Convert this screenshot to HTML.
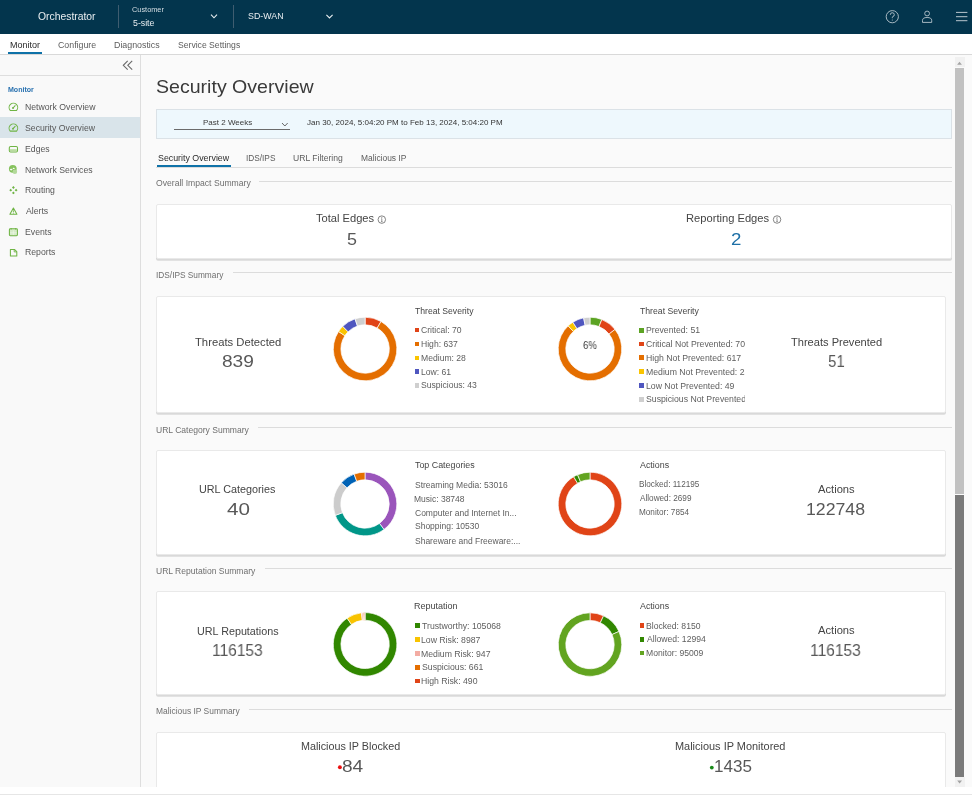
<!DOCTYPE html>
<html><head><meta charset="utf-8"><title>Security Overview</title>
<style>
html,body{margin:0;padding:0;width:972px;height:795px;overflow:hidden;background:#fafafa;font-family:"Liberation Sans", sans-serif;}
.a{position:absolute;}
.t{position:absolute;white-space:nowrap;line-height:1;font-family:"Liberation Sans", sans-serif;will-change:transform;}
.sq{position:absolute;width:4.8px;height:4.8px;}
.card{position:absolute;background:#fff;border:1px solid #e9e9e9;border-radius:2px;box-shadow:0 1.8px 0.4px rgba(0,0,0,0.13);box-sizing:border-box;}
.hr{position:absolute;height:1px;background:#dcdcdc;}
</style></head><body>
<!-- header -->
<div class="a" style="left:0;top:0;width:972px;height:33.5px;background:#03354d"></div>
<div class="a" style="left:117.6px;top:5px;width:1px;height:23px;background:#3f5d70"></div>
<div class="a" style="left:232.8px;top:5px;width:1px;height:23px;background:#3f5d70"></div>
<!-- nav -->
<div class="a" style="left:0;top:33.5px;width:972px;height:20.5px;background:#fff"></div>
<div class="a" style="left:0;top:54px;width:972px;height:1px;background:#d9d9d9"></div>
<div class="a" style="left:8.4px;top:52.3px;width:33.6px;height:2px;background:#0f72a8"></div>
<!-- sidebar -->
<div class="a" style="left:0;top:55px;width:140px;height:740px;background:#f9f9f9"></div>
<div class="a" style="left:140px;top:55px;width:1px;height:740px;background:#dedede"></div>
<div class="a" style="left:0;top:75px;width:140px;height:1px;background:#dedede"></div>
<div class="a" style="left:0;top:117.4px;width:140px;height:20.7px;background:#d9e4ea"></div>
<!-- date bar -->
<div class="a" style="left:156px;top:109px;width:796px;height:30px;background:#eef8fd;border:1px solid #dbe2e7;box-sizing:border-box"></div>
<div class="a" style="left:174px;top:128.6px;width:115.7px;height:1.1px;background:#6b6b6b"></div>
<!-- tabs -->
<div class="a" style="left:156px;top:167px;width:796px;height:1px;background:#dcdcdc"></div>
<div class="a" style="left:157px;top:165.3px;width:73.5px;height:2px;background:#0f72a8"></div>
<!-- section lines -->
<div class="hr" style="left:259px;top:181.1px;width:693px"></div>
<div class="hr" style="left:232.5px;top:272.3px;width:719.5px"></div>
<div class="hr" style="left:258px;top:427.3px;width:694px"></div>
<div class="hr" style="left:264.5px;top:568px;width:687.5px"></div>
<div class="hr" style="left:248.6px;top:709px;width:703.4px"></div>
<!-- cards -->
<div class="card" style="left:156px;top:204px;width:796px;height:55px"></div>
<div class="card" style="left:156px;top:296px;width:790px;height:117px"></div>
<div class="card" style="left:156px;top:450px;width:790px;height:105px"></div>
<div class="card" style="left:156px;top:591px;width:790px;height:104px"></div>
<div class="card" style="left:156px;top:732px;width:790px;height:57px"></div>
<!-- bottom strip -->
<div class="a" style="left:0;top:786.6px;width:972px;height:8.4px;background:#fff"></div>
<div class="a" style="left:0;top:794.2px;width:972px;height:0.8px;background:#e6e6e6"></div>
<!-- scrollbar -->
<div class="a" style="left:955px;top:57px;width:10px;height:10px;background:#f1f1f1"></div>
<div class="a" style="left:955px;top:777px;width:10px;height:10px;background:#f1f1f1"></div>
<div class="a" style="left:955px;top:68.1px;width:9.3px;height:426.4px;background:#c1c1c1"></div>
<div class="a" style="left:955px;top:494.5px;width:9.3px;height:282.7px;background:#7a7a7a"></div>
<svg class="a" style="left:0;top:0" width="972" height="795" viewBox="0 0 972 795">
<path d="M957.1,64.8 L959.5,61.8 L961.9,64.8 Z" fill="#a3a3a3"/>
<path d="M957.2,780.6 L959.6,783.6 L962,780.6 Z" fill="#a3a3a3"/>
<!-- header chevrons -->
<path d="M211,14.6 L214,17.8 L217,14.6" fill="none" stroke="#e9eef1" stroke-width="1.1"/>
<path d="M326.4,14.9 L329.5,17.9 L332.6,14.9" fill="none" stroke="#e9eef1" stroke-width="1.1"/>
<!-- header icons -->
<circle cx="892.3" cy="16.7" r="6.1" fill="none" stroke="#b9c6ce" stroke-width="0.9"/>
<path d="M890.3,14.8 A2,2 0 1 1 892.6,16.7 Q892.3,17 892.3,18.2" fill="none" stroke="#b9c6ce" stroke-width="0.9"/>
<circle cx="892.3" cy="20" r="0.55" fill="#b9c6ce"/>
<circle cx="927.1" cy="13.5" r="2.4" fill="none" stroke="#b9c6ce" stroke-width="0.9"/>
<path d="M922.5,22.4 V20.4 Q922.5,17.5 927.1,17.5 Q931.7,17.5 931.7,20.4 V22.4 Z" fill="none" stroke="#b9c6ce" stroke-width="0.9" stroke-linejoin="round"/>
<path d="M956,12.4 H967.4 M956,16.7 H967.4 M956,20.7 H967.4" stroke="#b9c6ce" stroke-width="1"/>
<!-- collapse icon -->
<path d="M127.7,60.9 L123.3,65.3 L127.7,69.7 M132.2,60.9 L127.8,65.3 L132.2,69.7" fill="none" stroke="#6a6a6a" stroke-width="1.1"/>
<!-- select chevron -->
<path d="M282,123 L284.85,126 L287.7,123" fill="none" stroke="#555" stroke-width="0.9"/>
<!-- info icons -->
<circle cx="381.8" cy="219.6" r="3.75" fill="none" stroke="#666" stroke-width="0.8"/>
<path d="M381.3,218.6 H381.8 V221.6 M381.1,221.6 H382.5" fill="none" stroke="#666" stroke-width="0.7"/><circle cx="381.8" cy="217.3" r="0.5" fill="#666"/>
<circle cx="777.05" cy="219.5" r="3.75" fill="none" stroke="#666" stroke-width="0.8"/>
<path d="M776.55,218.5 H777.05 V221.5 M776.35,221.5 H777.75" fill="none" stroke="#666" stroke-width="0.7"/><circle cx="777.05" cy="217.2" r="0.5" fill="#666"/>
<!-- dots -->
<circle cx="339.9" cy="767.3" r="1.95" fill="#ea1010"/>
<circle cx="711.8" cy="767.6" r="1.9" fill="#1a8a1a"/>
<path d="M365.100,317.200 A31.8,31.8 0 0 1 381.017,321.470 L377.213,328.050 A24.2,24.2 0 0 0 365.100,324.800 Z" fill="#e04417" stroke="#fff" stroke-width="0.7"/>
<path d="M381.017,321.470 A31.8,31.8 0 1 1 338.540,331.513 L344.888,335.692 A24.2,24.2 0 1 0 377.213,328.050 Z" fill="#e46e00" stroke="#fff" stroke-width="0.7"/>
<path d="M338.540,331.513 A31.8,31.8 0 0 1 342.762,326.367 L348.101,331.776 A24.2,24.2 0 0 0 344.888,335.692 Z" fill="#fac400" stroke="#fff" stroke-width="0.7"/>
<path d="M342.762,326.367 A31.8,31.8 0 0 1 355.036,318.835 L357.441,326.044 A24.2,24.2 0 0 0 348.101,331.776 Z" fill="#4f56bf" stroke="#fff" stroke-width="0.7"/>
<path d="M355.036,318.835 A31.8,31.8 0 0 1 365.100,317.200 L365.100,324.800 A24.2,24.2 0 0 0 357.441,326.044 Z" fill="#cfcfcf" stroke="#fff" stroke-width="0.7"/>
<path d="M590.000,317.200 A31.8,31.8 0 0 1 601.852,319.491 L599.020,326.544 A24.2,24.2 0 0 0 590.000,324.800 Z" fill="#5ca323" stroke="#fff" stroke-width="0.7"/>
<path d="M601.852,319.491 A31.8,31.8 0 0 1 615.031,329.387 L609.049,334.074 A24.2,24.2 0 0 0 599.020,326.544 Z" fill="#e04417" stroke="#fff" stroke-width="0.7"/>
<path d="M615.031,329.387 A31.8,31.8 0 1 1 568.176,325.871 L573.392,331.399 A24.2,24.2 0 1 0 609.049,334.074 Z" fill="#e46e00" stroke="#fff" stroke-width="0.7"/>
<path d="M568.176,325.871 A31.8,31.8 0 0 1 572.862,322.213 L576.958,328.615 A24.2,24.2 0 0 0 573.392,331.399 Z" fill="#fac400" stroke="#fff" stroke-width="0.7"/>
<path d="M572.862,322.213 A31.8,31.8 0 0 1 583.614,317.848 L585.140,325.293 A24.2,24.2 0 0 0 576.958,328.615 Z" fill="#4f56bf" stroke="#fff" stroke-width="0.7"/>
<path d="M583.614,317.848 A31.8,31.8 0 0 1 590.000,317.200 L590.000,324.800 A24.2,24.2 0 0 0 585.140,325.293 Z" fill="#cfcfcf" stroke="#fff" stroke-width="0.7"/>
<path d="M365.000,472.200 A31.8,31.8 0 0 1 384.004,529.496 L379.463,523.403 A24.2,24.2 0 0 0 365.000,479.800 Z" fill="#9a55bb" stroke="#fff" stroke-width="0.7"/>
<path d="M384.004,529.496 A31.8,31.8 0 0 1 335.312,515.396 L342.407,512.673 A24.2,24.2 0 0 0 379.463,523.403 Z" fill="#009688" stroke="#fff" stroke-width="0.7"/>
<path d="M335.312,515.396 A31.8,31.8 0 0 1 341.368,482.722 L347.016,487.807 A24.2,24.2 0 0 0 342.407,512.673 Z" fill="#cccccc" stroke="#fff" stroke-width="0.7"/>
<path d="M341.368,482.722 A31.8,31.8 0 0 1 354.124,474.118 L356.723,481.259 A24.2,24.2 0 0 0 347.016,487.807 Z" fill="#0062b5" stroke="#fff" stroke-width="0.7"/>
<path d="M354.124,474.118 A31.8,31.8 0 0 1 365.000,472.200 L365.000,479.800 A24.2,24.2 0 0 0 356.723,481.259 Z" fill="#e46e00" stroke="#fff" stroke-width="0.7"/>
<path d="M590.000,472.200 A31.8,31.8 0 1 1 573.645,476.728 L577.554,483.246 A24.2,24.2 0 1 0 590.000,479.800 Z" fill="#e04417" stroke="#fff" stroke-width="0.7"/>
<path d="M573.645,476.728 A31.8,31.8 0 0 1 577.557,474.735 L580.531,481.729 A24.2,24.2 0 0 0 577.554,483.246 Z" fill="#318700" stroke="#fff" stroke-width="0.7"/>
<path d="M577.557,474.735 A31.8,31.8 0 0 1 590.000,472.200 L590.000,479.800 A24.2,24.2 0 0 0 580.531,481.729 Z" fill="#62a420" stroke="#fff" stroke-width="0.7"/>
<path d="M365.100,612.600 A31.8,31.8 0 1 1 347.154,618.148 L351.443,624.422 A24.2,24.2 0 1 0 365.100,620.200 Z" fill="#318700" stroke="#fff" stroke-width="0.7"/>
<path d="M347.154,618.148 A31.8,31.8 0 0 1 361.499,612.805 L362.359,620.356 A24.2,24.2 0 0 0 351.443,624.422 Z" fill="#f8c300" stroke="#fff" stroke-width="0.7"/>
<path d="M361.499,612.805 A31.8,31.8 0 0 1 363.121,612.662 L363.594,620.247 A24.2,24.2 0 0 0 362.359,620.356 Z" fill="#f3aca3" stroke="#fff" stroke-width="0.7"/>
<path d="M363.121,612.662 A31.8,31.8 0 0 1 364.257,612.611 L364.459,620.209 A24.2,24.2 0 0 0 363.594,620.247 Z" fill="#e46e00" stroke="#fff" stroke-width="0.7"/>
<path d="M364.257,612.611 A31.8,31.8 0 0 1 365.100,612.600 L365.100,620.200 A24.2,24.2 0 0 0 364.459,620.209 Z" fill="#e04417" stroke="#fff" stroke-width="0.7"/>
<path d="M590.000,612.800 A31.8,31.8 0 0 1 603.570,615.841 L600.327,622.714 A24.2,24.2 0 0 0 590.000,620.400 Z" fill="#e04417" stroke="#fff" stroke-width="0.7"/>
<path d="M603.570,615.841 A31.8,31.8 0 0 1 618.944,631.429 L612.027,634.577 A24.2,24.2 0 0 0 600.327,622.714 Z" fill="#318700" stroke="#fff" stroke-width="0.7"/>
<path d="M618.944,631.429 A31.8,31.8 0 1 1 590.000,612.800 L590.000,620.400 A24.2,24.2 0 1 0 612.027,634.577 Z" fill="#62a420" stroke="#fff" stroke-width="0.7"/>
<g transform="translate(13.4,107.1)"><path d="M-3.2,3.3 A4.3,4.3 0 1 1 3.2,3.3 Z" fill="none" stroke="#6fb444" stroke-width="1.05" stroke-linejoin="round"/><path d="M-0.4,0.9 L2.0,-1.7" stroke="#6fb444" stroke-width="1.1"/><circle cx="-0.4" cy="0.9" r="1.0" fill="#6fb444"/></g>
<g transform="translate(13.4,127.8)"><path d="M-3.2,3.3 A4.3,4.3 0 1 1 3.2,3.3 Z" fill="none" stroke="#6fb444" stroke-width="1.05" stroke-linejoin="round"/><path d="M-0.4,0.9 L2.0,-1.7" stroke="#6fb444" stroke-width="1.1"/><circle cx="-0.4" cy="0.9" r="1.0" fill="#6fb444"/></g>
<g transform="translate(13.4,149.0)"><rect x="-4.1" y="-2.6" width="8.2" height="5.6" rx="1.3" fill="none" stroke="#6fb444" stroke-width="1.05"/><rect x="-3.4" y="0.2" width="6.8" height="2.1" fill="#b9dca0"/></g>
<g transform="translate(13.4,169.5)"><circle cx="-0.6" cy="-0.7" r="3.9" fill="#86c25e"/><ellipse cx="-2.2" cy="0.1" rx="1.3" ry="0.8" fill="#fafafa"/><ellipse cx="0.3" cy="-1.1" rx="1.0" ry="0.6" fill="#fafafa"/><circle cx="1.45" cy="2.2" r="2.3" fill="#b3d99a"/></g>
<g transform="translate(13.4,190.2)"><path d="M0,-4.1 L1.4,-2.7 L0,-1.3 L-1.4,-2.7 Z M0,4.1 L1.4,2.7 L0,1.3 L-1.4,2.7 Z M-4.1,0 L-2.7,1.4 L-1.3,0 L-2.7,-1.4 Z M4.1,0 L2.7,1.4 L1.3,0 L2.7,-1.4 Z" fill="#6fb444"/></g>
<g transform="translate(13.4,211.2)"><path d="M0,-3.2 L3.5,3.0 L-3.5,3.0 Z" fill="none" stroke="#6fb444" stroke-width="1.05" stroke-linejoin="round"/><path d="M0,-0.9 V1.2" stroke="#6fb444" stroke-width="0.9"/><circle cx="0" cy="2.1" r="0.45" fill="#6fb444"/></g>
<g transform="translate(13.4,232.0)"><rect x="-4.0" y="-3.2" width="8.0" height="6.9" rx="0.9" fill="#d6ebc8" stroke="#6fb444" stroke-width="1.05"/><path d="M-2.2,-4.0 V-2.4 M2.2,-4.0 V-2.4" stroke="#6fb444" stroke-width="0.9"/><path d="M0,-1.6 V3 M-3.4,0.8 H3.4" stroke="#eef6e8" stroke-width="0.6"/></g>
<g transform="translate(13.4,252.7)"><path d="M-3.0,-3.3 H1.0 L3.4,-1.0 V3.4 H-3.0 Z" fill="none" stroke="#6fb444" stroke-width="1.05" stroke-linejoin="round"/><path d="M0.8,-3.3 V-0.8 H3.4" fill="none" stroke="#6fb444" stroke-width="0.9"/></g>
</svg>
<div class="t" style="left:37.79px;top:11.58px;font-size:10.37px;transform:scaleX(1.0000);transform-origin:0.41px 0;color:#e9eef1;">Orchestrator</div>
<div class="t" style="left:132.43px;top:5.73px;font-size:7.37px;transform:scaleX(1.0000);transform-origin:0.37px 0;color:#d5dee4;">Customer</div>
<div class="t" style="left:132.65px;top:19.14px;font-size:8.78px;transform:scaleX(1.0000);transform-origin:0.35px 0;color:#e9eef1;">5-site</div>
<div class="t" style="left:247.75px;top:12.07px;font-size:8.86px;transform:scaleX(1.0000);transform-origin:0.35px 0;color:#e9eef1;">SD-WAN</div>
<div class="t" style="left:9.78px;top:40.73px;font-size:9.02px;transform:scaleX(1.0000);transform-origin:0.72px 0;color:#2b2b2b;">Monitor</div>
<div class="t" style="left:58.16px;top:40.92px;font-size:8.80px;transform:scaleX(1.0000);transform-origin:0.44px 0;color:#5c5c5c;">Configure</div>
<div class="t" style="left:113.99px;top:40.89px;font-size:8.84px;transform:scaleX(1.0000);transform-origin:0.71px 0;color:#5c5c5c;">Diagnostics</div>
<div class="t" style="left:177.66px;top:41.07px;font-size:8.62px;transform:scaleX(1.0000);transform-origin:0.34px 0;color:#5c5c5c;">Service Settings</div>
<div class="t" style="left:24.90px;top:103.20px;font-size:8.70px;transform:scaleX(1.0000);transform-origin:0.70px 0;color:#575757;">Network Overview</div>
<div class="t" style="left:25.25px;top:123.91px;font-size:8.70px;transform:scaleX(1.0000);transform-origin:0.35px 0;color:#575757;">Security Overview</div>
<div class="t" style="left:24.90px;top:144.90px;font-size:8.70px;transform:scaleX(1.0000);transform-origin:0.70px 0;color:#575757;">Edges</div>
<div class="t" style="left:24.90px;top:165.60px;font-size:8.70px;transform:scaleX(1.0000);transform-origin:0.70px 0;color:#575757;">Network Services</div>
<div class="t" style="left:24.90px;top:186.00px;font-size:8.70px;transform:scaleX(1.0000);transform-origin:0.70px 0;color:#575757;">Routing</div>
<div class="t" style="left:25.60px;top:207.00px;font-size:8.70px;transform:scaleX(1.0000);transform-origin:0.00px 0;color:#575757;">Alerts</div>
<div class="t" style="left:24.90px;top:227.70px;font-size:8.70px;transform:scaleX(1.0000);transform-origin:0.70px 0;color:#575757;">Events</div>
<div class="t" style="left:24.90px;top:248.40px;font-size:8.70px;transform:scaleX(1.0000);transform-origin:0.70px 0;color:#575757;">Reports</div>
<div class="t" style="left:156.06px;top:77.76px;font-size:18.40px;transform:scaleX(1.0645);transform-origin:0.74px 0;color:#3a3a3a;">Security Overview</div>
<div class="t" style="left:203.36px;top:118.68px;font-size:8.03px;transform:scaleX(1.0000);transform-origin:0.64px 0;color:#3a3a3a;">Past 2 Weeks</div>
<div class="t" style="left:306.72px;top:119.17px;font-size:8.03px;transform:scaleX(1.0000);transform-origin:0.08px 0;color:#333333;">Jan 30, 2024, 5:04:20 PM to Feb 13, 2024, 5:04:20 PM</div>
<div class="t" style="left:157.95px;top:153.89px;font-size:8.83px;transform:scaleX(1.0000);transform-origin:0.35px 0;color:#2b2b2b;">Security Overview</div>
<div class="t" style="left:246.45px;top:154.86px;font-size:8.28px;transform:scaleX(1.0000);transform-origin:0.75px 0;color:#5c5c5c;">IDS/IPS</div>
<div class="t" style="left:293.30px;top:154.09px;font-size:8.60px;transform:scaleX(1.0000);transform-origin:0.60px 0;color:#5c5c5c;">URL Filtering</div>
<div class="t" style="left:361.03px;top:153.65px;font-size:8.42px;transform:scaleX(1.0000);transform-origin:0.67px 0;color:#5c5c5c;">Malicious IP</div>
<div class="t" style="left:155.66px;top:179.07px;font-size:8.62px;transform:scaleX(1.0000);transform-origin:0.34px 0;color:#6f6f6f;">Overall Impact Summary</div>
<div class="t" style="left:155.65px;top:271.24px;font-size:8.30px;transform:scaleX(1.0000);transform-origin:0.75px 0;color:#6f6f6f;">IDS/IPS Summary</div>
<div class="t" style="left:155.80px;top:425.73px;font-size:8.56px;transform:scaleX(1.0000);transform-origin:0.60px 0;color:#6f6f6f;">URL Category Summary</div>
<div class="t" style="left:155.80px;top:566.54px;font-size:8.54px;transform:scaleX(1.0000);transform-origin:0.60px 0;color:#6f6f6f;">URL Reputation Summary</div>
<div class="t" style="left:155.72px;top:707.22px;font-size:8.44px;transform:scaleX(1.0000);transform-origin:0.68px 0;color:#6f6f6f;">Malicious IP Summary</div>
<div class="t" style="left:315.88px;top:212.76px;font-size:11.11px;transform:scaleX(1.0000);transform-origin:0.22px 0;color:#444444;">Total Edges</div>
<div class="t" style="left:347.10px;top:231.11px;font-size:17.40px;transform:scaleX(1.0297);transform-origin:0.70px 0;color:#585858;">5</div>
<div class="t" style="left:686.11px;top:212.70px;font-size:11.17px;transform:scaleX(1.0000);transform-origin:0.89px 0;color:#444444;">Reporting Edges</div>
<div class="t" style="left:730.93px;top:231.11px;font-size:17.40px;transform:scaleX(1.0745);transform-origin:0.87px 0;color:#1d6fa6;">2</div>
<div class="t" style="left:195.48px;top:336.84px;font-size:11.25px;transform:scaleX(1.0000);transform-origin:0.22px 0;color:#444444;">Threats Detected</div>
<div class="t" style="left:222.12px;top:354.33px;font-size:16.90px;transform:scaleX(1.1331);transform-origin:0.68px 0;color:#585858;">839</div>
<div class="t" style="left:790.98px;top:336.68px;font-size:11.08px;transform:scaleX(1.0000);transform-origin:0.22px 0;color:#444444;">Threats Prevented</div>
<div class="t" style="left:828.02px;top:354.13px;font-size:16.90px;transform:scaleX(0.8823);transform-origin:0.68px 0;color:#585858;">51</div>
<div class="t" style="left:199.44px;top:484.21px;font-size:10.81px;transform:scaleX(1.0000);transform-origin:0.76px 0;color:#444444;">URL Categories</div>
<div class="t" style="left:226.86px;top:502.23px;font-size:16.90px;transform:scaleX(1.2214);transform-origin:0.34px 0;color:#585858;">40</div>
<div class="t" style="left:817.80px;top:483.88px;font-size:11.20px;transform:scaleX(1.0000);transform-origin:0.00px 0;color:#444444;">Actions</div>
<div class="t" style="left:806.32px;top:502.13px;font-size:16.90px;transform:scaleX(1.0476);transform-origin:1.18px 0;color:#585858;">122748</div>
<div class="t" style="left:196.85px;top:625.54px;font-size:10.78px;transform:scaleX(1.0000);transform-origin:0.75px 0;color:#444444;">URL Reputations</div>
<div class="t" style="left:212.32px;top:642.93px;font-size:16.90px;transform:scaleX(0.9167);transform-origin:1.18px 0;color:#585858;">116153</div>
<div class="t" style="left:817.80px;top:624.68px;font-size:11.20px;transform:scaleX(1.0000);transform-origin:0.00px 0;color:#444444;">Actions</div>
<div class="t" style="left:809.82px;top:643.33px;font-size:16.90px;transform:scaleX(0.9185);transform-origin:1.18px 0;color:#585858;">116153</div>
<div class="t" style="left:300.54px;top:741.14px;font-size:10.78px;transform:scaleX(1.0000);transform-origin:0.86px 0;color:#444444;">Malicious IP Blocked</div>
<div class="t" style="left:341.82px;top:759.43px;font-size:16.90px;transform:scaleX(1.1312);transform-origin:0.68px 0;color:#585858;">84</div>
<div class="t" style="left:675.02px;top:741.09px;font-size:10.95px;transform:scaleX(1.0000);transform-origin:0.88px 0;color:#444444;">Malicious IP Monitored</div>
<div class="t" style="left:713.52px;top:759.13px;font-size:16.90px;transform:scaleX(1.0111);transform-origin:1.18px 0;color:#585858;">1435</div>
<div class="t" style="left:583.49px;top:340.63px;font-size:10.20px;transform:scaleX(0.9329);transform-origin:0.51px 0;color:#3a3a3a;">6%</div>
<div class="t" style="left:415.33px;top:306.64px;font-size:8.65px;transform:scaleX(1.0000);transform-origin:0.17px 0;color:#454545;">Threat Severity</div>
<div class="t" style="left:639.83px;top:306.92px;font-size:8.68px;transform:scaleX(1.0000);transform-origin:0.17px 0;color:#454545;">Threat Severity</div>
<div class="t" style="left:414.82px;top:461.45px;font-size:8.88px;transform:scaleX(1.0000);transform-origin:0.18px 0;color:#454545;">Top Categories</div>
<div class="t" style="left:639.70px;top:461.14px;font-size:8.89px;transform:scaleX(1.0000);transform-origin:0.00px 0;color:#454545;">Actions</div>
<div class="t" style="left:414.08px;top:602.03px;font-size:9.02px;transform:scaleX(1.0000);transform-origin:0.72px 0;color:#454545;">Reputation</div>
<div class="t" style="left:639.70px;top:601.94px;font-size:8.89px;transform:scaleX(1.0000);transform-origin:0.00px 0;color:#454545;">Actions</div>
<div class="sq" style="left:414.60px;top:327.70px;background:#e04417"></div>
<div class="t" style="left:421.27px;top:326.29px;font-size:8.6px;color:#5e5e5e;">Critical: 70</div>
<div class="sq" style="left:414.60px;top:341.60px;background:#e46e00"></div>
<div class="t" style="left:421.01px;top:340.19px;font-size:8.6px;color:#5e5e5e;">High: 637</div>
<div class="sq" style="left:414.60px;top:355.60px;background:#fac400"></div>
<div class="t" style="left:421.01px;top:354.19px;font-size:8.6px;color:#5e5e5e;">Medium: 28</div>
<div class="sq" style="left:414.60px;top:369.30px;background:#4f56bf"></div>
<div class="t" style="left:421.01px;top:367.89px;font-size:8.6px;color:#5e5e5e;">Low: 61</div>
<div class="sq" style="left:414.60px;top:382.80px;background:#cfcfcf"></div>
<div class="t" style="left:421.36px;top:381.39px;font-size:8.6px;color:#5e5e5e;">Suspicious: 43</div>
<div class="sq" style="left:639.10px;top:327.80px;background:#5ca323"></div>
<div class="t" style="left:645.90px;top:326.31px;font-size:8.7px;color:#5e5e5e;width:98.90px;overflow:hidden;">Prevented: 51</div>
<div class="sq" style="left:639.10px;top:341.60px;background:#e04417"></div>
<div class="t" style="left:646.17px;top:340.11px;font-size:8.7px;color:#5e5e5e;width:98.63px;overflow:hidden;">Critical Not Prevented: 70</div>
<div class="sq" style="left:639.10px;top:355.30px;background:#e46e00"></div>
<div class="t" style="left:645.90px;top:353.81px;font-size:8.7px;color:#5e5e5e;width:98.90px;overflow:hidden;">High Not Prevented: 617</div>
<div class="sq" style="left:639.10px;top:369.20px;background:#fac400"></div>
<div class="t" style="left:645.90px;top:367.71px;font-size:8.7px;color:#5e5e5e;width:98.90px;overflow:hidden;">Medium Not Prevented: 25</div>
<div class="sq" style="left:639.10px;top:383.10px;background:#4f56bf"></div>
<div class="t" style="left:645.90px;top:381.61px;font-size:8.7px;color:#5e5e5e;width:98.90px;overflow:hidden;">Low Not Prevented: 49</div>
<div class="sq" style="left:639.10px;top:396.90px;background:#cfcfcf"></div>
<div class="t" style="left:646.25px;top:395.41px;font-size:8.7px;color:#5e5e5e;width:98.55px;overflow:hidden;">Suspicious Not Prevented: 27</div>
<div class="t" style="left:414.66px;top:480.97px;font-size:8.5px;color:#5e5e5e;">Streaming Media: 53016</div>
<div class="t" style="left:414.32px;top:495.07px;font-size:8.5px;color:#5e5e5e;">Music: 38748</div>
<div class="t" style="left:414.57px;top:509.07px;font-size:8.5px;color:#5e5e5e;">Computer and Internet In...</div>
<div class="t" style="left:414.66px;top:522.48px;font-size:8.5px;color:#5e5e5e;">Shopping: 10530</div>
<div class="t" style="left:414.66px;top:536.57px;font-size:8.5px;color:#5e5e5e;">Shareware and Freeware:...</div>
<div class="t" style="left:639.04px;top:480.73px;font-size:8.2px;color:#5e5e5e;">Blocked: 112195</div>
<div class="t" style="left:639.70px;top:494.73px;font-size:8.2px;color:#5e5e5e;">Allowed: 2699</div>
<div class="t" style="left:639.04px;top:508.73px;font-size:8.2px;color:#5e5e5e;">Monitor: 7854</div>
<div class="sq" style="left:414.80px;top:623.40px;background:#318700"></div>
<div class="t" style="left:421.83px;top:621.90px;font-size:8.7px;color:#5e5e5e;">Trustworthy: 105068</div>
<div class="sq" style="left:414.80px;top:637.10px;background:#f8c300"></div>
<div class="t" style="left:421.30px;top:635.61px;font-size:8.7px;color:#5e5e5e;">Low Risk: 8987</div>
<div class="sq" style="left:414.80px;top:651.00px;background:#f3aca3"></div>
<div class="t" style="left:421.30px;top:649.50px;font-size:8.7px;color:#5e5e5e;">Medium Risk: 947</div>
<div class="sq" style="left:414.80px;top:664.80px;background:#e46e00"></div>
<div class="t" style="left:421.65px;top:663.31px;font-size:8.7px;color:#5e5e5e;">Suspicious: 661</div>
<div class="sq" style="left:414.80px;top:678.60px;background:#e04417"></div>
<div class="t" style="left:421.30px;top:677.11px;font-size:8.7px;color:#5e5e5e;">High Risk: 490</div>
<div class="sq" style="left:639.50px;top:623.20px;background:#e04417"></div>
<div class="t" style="left:646.01px;top:621.79px;font-size:8.6px;color:#5e5e5e;">Blocked: 8150</div>
<div class="sq" style="left:639.50px;top:636.80px;background:#318700"></div>
<div class="t" style="left:646.70px;top:635.39px;font-size:8.6px;color:#5e5e5e;">Allowed: 12994</div>
<div class="sq" style="left:639.50px;top:650.50px;background:#62a420"></div>
<div class="t" style="left:646.01px;top:649.09px;font-size:8.6px;color:#5e5e5e;">Monitor: 95009</div>
<div class="t" style="left:7.78px;top:86.2px;font-size:7.06px;font-weight:bold;color:#2a72b0">Monitor</div>
</body></html>
